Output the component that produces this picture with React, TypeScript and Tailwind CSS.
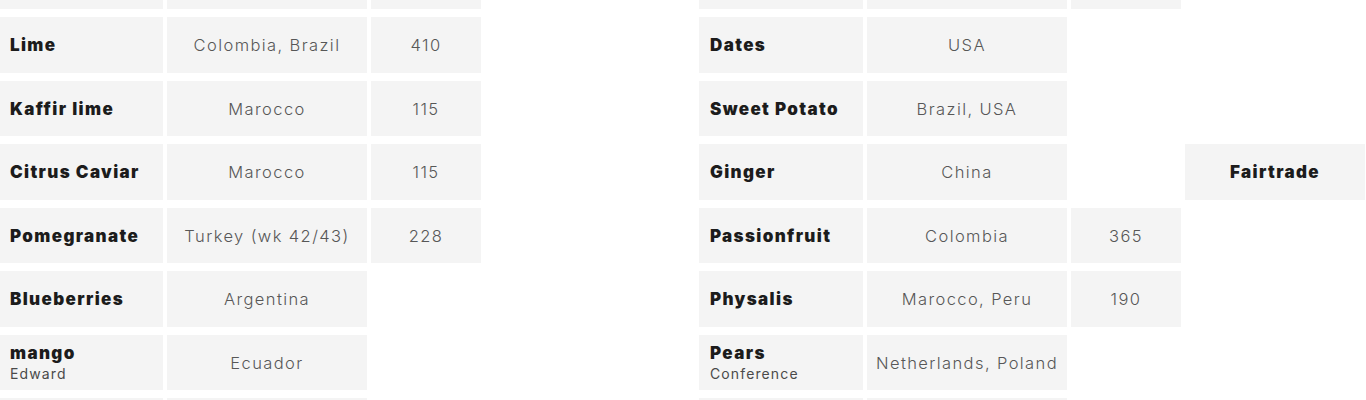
import React from "react";

type Cell =
  | null
  | { kind: "blank" }
  | { kind: "name"; text: string; sub?: string }
  | { kind: "val"; text: string }
  | { kind: "badge"; text: string };

const N = (text: string, sub?: string): Cell => ({ kind: "name", text, sub });
const V = (text: string): Cell => ({ kind: "val", text });
const B: Cell = { kind: "blank" };

const leftRows: Cell[][] = [
  [B, B, B, null],
  [N("Lime"), V("Colombia, Brazil"), V("410"), null],
  [N("Kaffir lime"), V("Marocco"), V("115"), null],
  [N("Citrus Caviar"), V("Marocco"), V("115"), null],
  [N("Pomegranate"), V("Turkey (wk 42/43)"), V("228"), null],
  [N("Blueberries"), V("Argentina"), null, null],
  [N("mango", "Edward"), V("Ecuador"), null, null],
  [B, B, null, null],
];

const rightRows: Cell[][] = [
  [B, B, B, null],
  [N("Dates"), V("USA"), null, null],
  [N("Sweet Potato"), V("Brazil, USA"), null, null],
  [N("Ginger"), V("China"), null, { kind: "badge", text: "Fairtrade" }],
  [N("Passionfruit"), V("Colombia"), V("365"), null],
  [N("Physalis"), V("Marocco, Peru"), V("190"), null],
  [N("Pears", "Conference"), V("Netherlands, Poland"), null, null],
  [B, B, null, null],
];

function CellView({ cell }: { cell: Cell }) {
  if (cell === null) return <div className="h-[55.5px]" />;
  if (cell.kind === "blank") return <div className="h-[55.5px] bg-[#f4f4f4]" />;
  if (cell.kind === "name")
    return (
      <div className="h-[55.5px] bg-[#f4f4f4] flex flex-col justify-center pl-[11px] pt-[2px] whitespace-nowrap">
        <div className="text-[17px] leading-[21px] font-black text-[#1c1c1c] tracking-[0.08em]">
          {cell.text}
        </div>
        {cell.sub && (
          <div className="text-[14px] leading-[20px] font-normal text-[#4a4a4a] tracking-[0.08em]">
            {cell.sub}
          </div>
        )}
      </div>
    );
  if (cell.kind === "badge")
    return (
      <div className="h-[55.5px] bg-[#f4f4f4] flex items-center justify-center pt-[2px]">
        <span className="text-[17px] font-black text-[#1c1c1c] tracking-[0.08em]">{cell.text}</span>
      </div>
    );
  return (
    <div className="h-[55.5px] bg-[#f4f4f4] flex items-center justify-center pt-[2px] whitespace-nowrap">
      <span className="text-[16.5px] font-light text-[#575757] tracking-[0.085em]">{cell.text}</span>
    </div>
  );
}

function Table({ rows }: { rows: Cell[][] }) {
  return (
    <div className="grid grid-cols-[164px_200px_110px_180px] gap-x-[4px] gap-y-[8px] shrink-0">
      {rows.flatMap((r, i) => r.map((c, j) => <CellView key={`${i}-${j}`} cell={c} />))}
    </div>
  );
}

export default function App() {
  return (
    <div
      className="w-[1366px] h-[400px] overflow-hidden bg-white"
      style={{ fontFamily: "Inter, 'Noto Sans', sans-serif" }}
    >
      <div className="flex gap-[34px] -ml-px -mt-[46.5px]">
        <Table rows={leftRows} />
        <Table rows={rightRows} />
      </div>
    </div>
  );
}
